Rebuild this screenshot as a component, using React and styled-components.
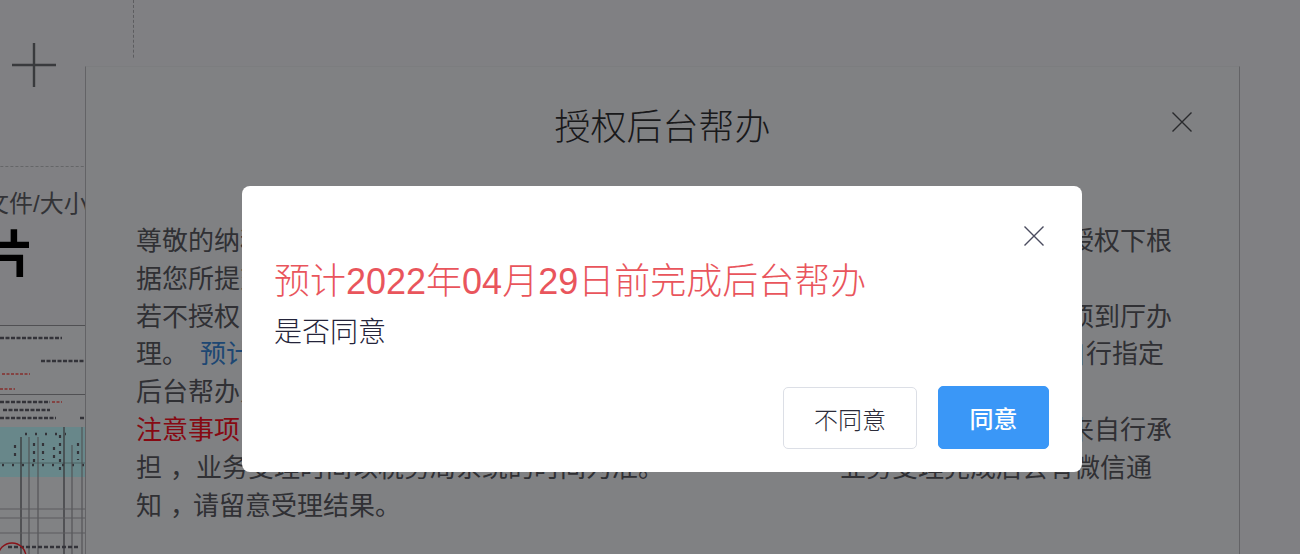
import styled, { createGlobalStyle } from "styled-components";

const GlobalStyle = createGlobalStyle`
  html, body {
    margin: 0;
    padding: 0;
    background: #d5d6da;
  }
  body {
    font-family: "Liberation Sans", "Noto Sans CJK SC", sans-serif;
  }
`;

const Page = styled.div`
  position: relative;
  width: 1300px;
  height: 554px;
  overflow: hidden;
  background: #d5d6da;
`;

const UploadColumn = styled.div`
  width: 134px;
  height: 100%;
  overflow: hidden;
`;

const UploadBox = styled.div`
  display: flex;
  align-items: center;
  justify-content: center;
  box-sizing: border-box;
  width: 199px;
  height: 167px;
  margin-left: -65px;
  padding-bottom: 37px;
  border-right: 1px dashed #9b9ca0;
  border-bottom: 1px dashed #a9aaae;
`;

const Caption = styled.div`
  margin: 20px 0 0 -15px;
  font-size: 24px;
  line-height: 34px;
  white-space: nowrap;
  color: #55565c;
`;

const BigChar = styled.div`
  height: 70px;
  margin: -1px 0 35px -16px;
  font-size: 50px;
  font-weight: 700;
  line-height: 70px;
  color: #000;
`;

const Preview = styled.svg`
  display: block;
  width: 85px;
  height: 229px;
`;

const BackDialog = styled.section`
  position: absolute;
  left: 85px;
  top: 66px;
  box-sizing: border-box;
  width: 1155px;
  height: 520px;
  padding: 0 0 0 50px;
  background: #d6d7db;
  border-left: 1px solid #a5a6aa;
  border-right: 1px solid #a5a6aa;
  border-top: 1px solid #cfd0d4;
  box-shadow: 0 -8px 0 #d5d6da;
`;

const BackTitle = styled.h2`
  margin: 0 0 0 -50px;
  height: 155px;
  padding-top: 37px;
  box-sizing: border-box;
  font-size: 36px;
  font-weight: 300;
  line-height: 48px;
  text-align: center;
  color: #2b2b2e;
`;

const BackClose = styled.button`
  position: absolute;
  top: 45px;
  right: 47px;
  display: flex;
  padding: 0;
  border: 0;
  background: none;
  color: #45464b;
`;

const TextRow = styled.p`
  display: flex;
  justify-content: space-between;
  box-sizing: border-box;
  width: 1036px;
  height: 37.8px;
  margin: 0;
  padding-right: ${(p) => p.$inset || 0}px;
  font-size: 26px;
  line-height: 38px;
  white-space: nowrap;
  color: #505157;
`;

const Comma = styled.span`
  margin: 0 -3px 0 8px;
`;

const Spaced = styled.span`
  margin-left: 3px;
`;

const Blue = styled.span`
  margin-left: 12px;
  color: #3377c0;
`;

const Red = styled.span`
  color: #e0101f;
`;

const Mask = styled.div`
  position: absolute;
  inset: 0;
  background: rgba(0, 0, 0, 0.4);
`;

const ConfirmBox = styled.div`
  position: absolute;
  left: 242px;
  top: 186px;
  box-sizing: border-box;
  width: 840px;
  height: 286px;
  padding: 64px 33px 23px 32px;
  background: #fff;
  border-radius: 8px;
`;

const ConfirmClose = styled.button`
  position: absolute;
  top: 40px;
  right: 38px;
  display: flex;
  padding: 0;
  border: 0;
  background: none;
  color: #4a4b5e;
`;

const ConfirmTitle = styled.h3`
  margin: 0;
  font-size: 36px;
  font-weight: 300;
  line-height: 64px;
  white-space: nowrap;
  color: #e9555c;
`;

const ConfirmText = styled.p`
  margin: 0;
  font-size: 28px;
  font-weight: 300;
  line-height: 38px;
  color: #24243a;
`;

const Footer = styled.div`
  display: flex;
  justify-content: flex-end;
  align-items: flex-end;
  gap: 21px;
  margin-top: 34px;
`;

const Button = styled.button`
  box-sizing: border-box;
  width: ${(p) => (p.$primary ? 111 : 134)}px;
  height: ${(p) => (p.$primary ? 63 : 62)}px;
  padding: 0;
  border: 1px solid ${(p) => (p.$primary ? "#3a97f7" : "#dcdfe6")};
  border-radius: 5px;
  background: ${(p) => (p.$primary ? "#3a97f7" : "#fff")};
  color: ${(p) => (p.$primary ? "#fff" : "#2c2c3a")};
  font-family: inherit;
  font-size: 24px;
  font-weight: ${(p) => (p.$primary ? 500 : 300)};
`;

function CloseIcon({ size }) {
  return (
    <svg width={size} height={size} viewBox="0 0 20 20" fill="none" stroke="currentColor" strokeWidth="1.4">
      <path d="M0.5 0.5 L19.5 19.5 M19.5 0.5 L0.5 19.5" />
    </svg>
  );
}

function DocPreview() {
  const ink = "#55565f";
  return (
    <Preview viewBox="0 0 85 229">
      <defs>
        <filter id="soft">
          <feGaussianBlur stdDeviation="0.75" />
        </filter>
      </defs>
      <rect width="85" height="229" fill="#d8d9dd" />
      <path d="M0 0.5H85M0 69.5H85" stroke="#85868a" strokeWidth="1" />
      <g filter="url(#soft)">
        <path d="M0 13H62M41 36H85M0 77H50M3 85H50M0 93H56M80 93H85" stroke={ink} strokeWidth="2.6" strokeDasharray="4 1.5" />
        <path d="M2 49H30M0 64H15M52 77H62" stroke="#e0504a" strokeWidth="1.6" strokeDasharray="3 1.5" />
        <rect y="102" width="85" height="50" fill="#aee2e6" />
        <path d="M25 109H66M2 140H85" stroke={ink} strokeWidth="2.4" strokeDasharray="2 8" />
        <path d="M15 120V135M34 118V140M43 118V135M54 122V135M60 110V145M78 118V135" stroke={ink} strokeWidth="2.2" strokeDasharray="3 5" />
        <path d="M0 138H85" stroke="#80a4a8" strokeWidth="1" />
        <path d="M21 112V229M64 102V229" stroke="#5e5f64" strokeWidth="1.3" />
        <path d="M29 112V229M38 112V229M72 120V229M82 102V229" stroke="#85868a" strokeWidth="1.1" />
        <path d="M0 184H85M0 193H85M0 208H85" stroke="#96979b" strokeWidth="1" />
        <path d="M8 222H78" stroke={ink} strokeWidth="2.4" strokeDasharray="4 2" />
      </g>
      <circle cx="12" cy="232" r="14" fill="none" stroke="#e5212b" strokeWidth="1.4" />
    </Preview>
  );
}

export default function App() {
  return (
    <Page>
      <GlobalStyle />
      <UploadColumn>
        <UploadBox>
          <svg width="44" height="44" viewBox="0 0 44 44" stroke="#606166" strokeWidth="2.4">
            <path d="M22 0V44M0 22H44" />
          </svg>
        </UploadBox>
        <Caption>文件/大小</Caption>
        <BigChar>片</BigChar>
        <DocPreview />
      </UploadColumn>

      <BackDialog>
        <BackTitle>授权后台帮办</BackTitle>
        <BackClose>
          <CloseIcon size={20} />
        </BackClose>
        <TextRow>
          <span>尊敬的纳税人：</span>
          <span>授权下根</span>
        </TextRow>
        <TextRow>
          <span>据您所提交的资料办理</span>
        </TextRow>
        <TextRow>
          <span>若不授权</span>
          <span>须到厅办</span>
        </TextRow>
        <TextRow $inset={8}>
          <span>
            理。<Blue>预计完成时间</Blue>
          </span>
          <span>自行指定</span>
        </TextRow>
        <TextRow>
          <span>后台帮办人员</span>
        </TextRow>
        <TextRow>
          <Red>注意事项：</Red>
          <span>来自行承</span>
        </TextRow>
        <TextRow $inset={20}>
          <span>
            担<Comma>，</Comma>
            <Spaced>业务受理时间以税务局系统的时间为准。</Spaced>
          </span>
          <span>业务受理完成后会有微信通</span>
        </TextRow>
        <TextRow>
          <span>
            知<Comma>，</Comma>请留意受理结果。
          </span>
        </TextRow>
      </BackDialog>

      <Mask />

      <ConfirmBox>
        <ConfirmClose>
          <CloseIcon size={20} />
        </ConfirmClose>
        <ConfirmTitle>预计2022年04月29日前完成后台帮办</ConfirmTitle>
        <ConfirmText>是否同意</ConfirmText>
        <Footer>
          <Button>不同意</Button>
          <Button $primary>同意</Button>
        </Footer>
      </ConfirmBox>
    </Page>
  );
}
